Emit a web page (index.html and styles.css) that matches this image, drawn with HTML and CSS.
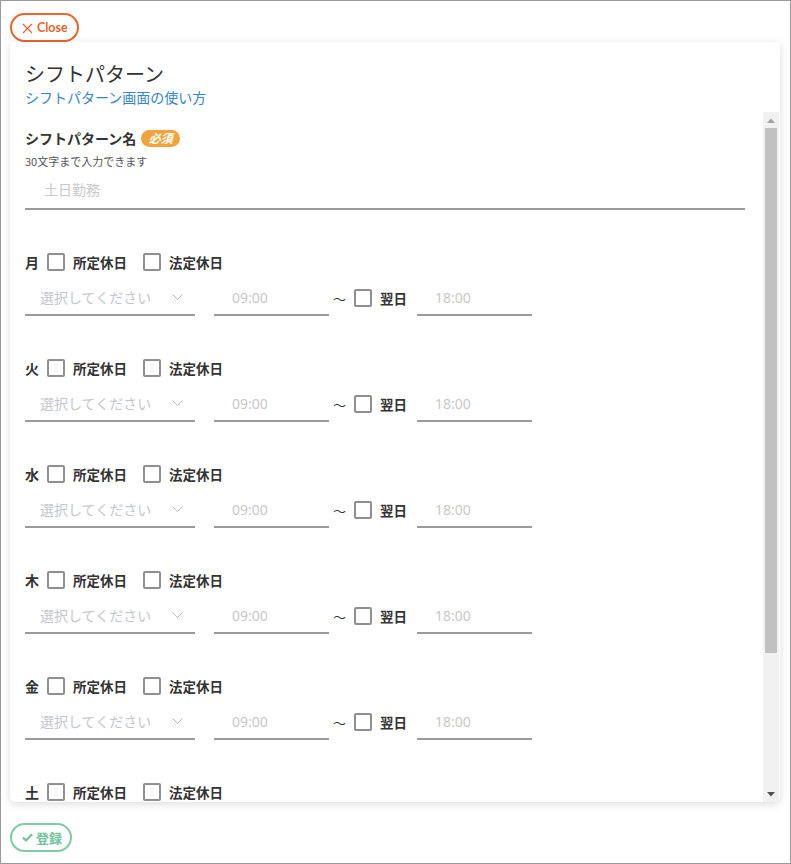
FILE: index.html
```html
<!DOCTYPE html>
<html lang="ja">
<head>
<meta charset="utf-8">
<title>シフトパターン</title>
<link rel="stylesheet" href="styles.css">
</head>
<body>
<div class="frame">
  <div class="top">
    <button class="btn btn-close" type="button">
      <svg class="ico" width="11" height="11" viewBox="0 0 11 11"><path d="M1 1 L10 10 M10 1 L1 10" stroke="currentColor" stroke-width="1.3" fill="none"/></svg>
      <span>Close</span>
    </button>
  </div>
  <div class="card">
    <div class="card-head">
      <h1 class="title">シフトパターン</h1>
      <a class="help-link" href="#">シフトパターン画面の使い方</a>
    </div>
    <div class="scroll-wrap">
      <div class="scroller">
        <div class="content">
          <div class="field-name">
            <div class="label-row"><span class="label">シフトパターン名</span><span class="badge">必須</span></div>
            <div class="hint">30文字まで入力できます</div>
            <input class="text-input" type="text" placeholder="土日勤務">
          </div>

          <div class="day">
            <div class="day-head">
              <span class="day-name">月</span>
              <input type="checkbox" class="cb"><span class="cb-label">所定休日</span>
              <input type="checkbox" class="cb cb-gap"><span class="cb-label">法定休日</span>
            </div>
            <div class="day-row">
              <div class="select"><span>選択してください</span><svg width="11" height="7" viewBox="0 0 11 7"><path d="M0.5 0.5 L5.5 5.5 L10.5 0.5" stroke="#b8b8b8" stroke-width="1" fill="none"/></svg></div>
              <input class="time" type="text" placeholder="09:00">
              <span class="tilde">〜</span>
              <input type="checkbox" class="cb cb-next"><span class="cb-label">翌日</span>
              <input class="time time-end" type="text" placeholder="18:00">
            </div>
          </div>

          <div class="day">
            <div class="day-head">
              <span class="day-name">火</span>
              <input type="checkbox" class="cb"><span class="cb-label">所定休日</span>
              <input type="checkbox" class="cb cb-gap"><span class="cb-label">法定休日</span>
            </div>
            <div class="day-row">
              <div class="select"><span>選択してください</span><svg width="11" height="7" viewBox="0 0 11 7"><path d="M0.5 0.5 L5.5 5.5 L10.5 0.5" stroke="#b8b8b8" stroke-width="1" fill="none"/></svg></div>
              <input class="time" type="text" placeholder="09:00">
              <span class="tilde">〜</span>
              <input type="checkbox" class="cb cb-next"><span class="cb-label">翌日</span>
              <input class="time time-end" type="text" placeholder="18:00">
            </div>
          </div>

          <div class="day">
            <div class="day-head">
              <span class="day-name">水</span>
              <input type="checkbox" class="cb"><span class="cb-label">所定休日</span>
              <input type="checkbox" class="cb cb-gap"><span class="cb-label">法定休日</span>
            </div>
            <div class="day-row">
              <div class="select"><span>選択してください</span><svg width="11" height="7" viewBox="0 0 11 7"><path d="M0.5 0.5 L5.5 5.5 L10.5 0.5" stroke="#b8b8b8" stroke-width="1" fill="none"/></svg></div>
              <input class="time" type="text" placeholder="09:00">
              <span class="tilde">〜</span>
              <input type="checkbox" class="cb cb-next"><span class="cb-label">翌日</span>
              <input class="time time-end" type="text" placeholder="18:00">
            </div>
          </div>

          <div class="day">
            <div class="day-head">
              <span class="day-name">木</span>
              <input type="checkbox" class="cb"><span class="cb-label">所定休日</span>
              <input type="checkbox" class="cb cb-gap"><span class="cb-label">法定休日</span>
            </div>
            <div class="day-row">
              <div class="select"><span>選択してください</span><svg width="11" height="7" viewBox="0 0 11 7"><path d="M0.5 0.5 L5.5 5.5 L10.5 0.5" stroke="#b8b8b8" stroke-width="1" fill="none"/></svg></div>
              <input class="time" type="text" placeholder="09:00">
              <span class="tilde">〜</span>
              <input type="checkbox" class="cb cb-next"><span class="cb-label">翌日</span>
              <input class="time time-end" type="text" placeholder="18:00">
            </div>
          </div>

          <div class="day">
            <div class="day-head">
              <span class="day-name">金</span>
              <input type="checkbox" class="cb"><span class="cb-label">所定休日</span>
              <input type="checkbox" class="cb cb-gap"><span class="cb-label">法定休日</span>
            </div>
            <div class="day-row">
              <div class="select"><span>選択してください</span><svg width="11" height="7" viewBox="0 0 11 7"><path d="M0.5 0.5 L5.5 5.5 L10.5 0.5" stroke="#b8b8b8" stroke-width="1" fill="none"/></svg></div>
              <input class="time" type="text" placeholder="09:00">
              <span class="tilde">〜</span>
              <input type="checkbox" class="cb cb-next"><span class="cb-label">翌日</span>
              <input class="time time-end" type="text" placeholder="18:00">
            </div>
          </div>

          <div class="day">
            <div class="day-head">
              <span class="day-name">土</span>
              <input type="checkbox" class="cb"><span class="cb-label">所定休日</span>
              <input type="checkbox" class="cb cb-gap"><span class="cb-label">法定休日</span>
            </div>
            <div class="day-row">
              <div class="select"><span>選択してください</span><svg width="11" height="7" viewBox="0 0 11 7"><path d="M0.5 0.5 L5.5 5.5 L10.5 0.5" stroke="#b8b8b8" stroke-width="1" fill="none"/></svg></div>
              <input class="time" type="text" placeholder="09:00">
              <span class="tilde">〜</span>
              <input type="checkbox" class="cb cb-next"><span class="cb-label">翌日</span>
              <input class="time time-end" type="text" placeholder="18:00">
            </div>
          </div>

          <div class="day">
            <div class="day-head">
              <span class="day-name">日</span>
              <input type="checkbox" class="cb"><span class="cb-label">所定休日</span>
              <input type="checkbox" class="cb cb-gap"><span class="cb-label">法定休日</span>
            </div>
            <div class="day-row">
              <div class="select"><span>選択してください</span><svg width="11" height="7" viewBox="0 0 11 7"><path d="M0.5 0.5 L5.5 5.5 L10.5 0.5" stroke="#b8b8b8" stroke-width="1" fill="none"/></svg></div>
              <input class="time" type="text" placeholder="09:00">
              <span class="tilde">〜</span>
              <input type="checkbox" class="cb cb-next"><span class="cb-label">翌日</span>
              <input class="time time-end" type="text" placeholder="18:00">
            </div>
          </div>
        </div>
      </div>
      <div class="scrollbar" aria-hidden="true">
        <div class="sb-arrow"><svg width="8" height="5" viewBox="0 0 8 5"><path d="M0 5 L4 0.5 L8 5 Z" fill="#a3a3a3"/></svg></div>
        <div class="sb-track"><div class="sb-thumb"></div></div>
        <div class="sb-arrow"><svg width="8" height="5" viewBox="0 0 8 5"><path d="M0 0 L8 0 L4 4.5 Z" fill="#505050"/></svg></div>
      </div>
    </div>
  </div>
  <div class="bottom">
    <button class="btn btn-submit" type="button">
      <svg class="ico" width="11" height="9" viewBox="0 0 11 9"><path d="M1 4.6 L4 7.5 L10 1.3" stroke="currentColor" stroke-width="2.2" fill="none" stroke-linejoin="round"/></svg>
      <span>登録</span>
    </button>
  </div>
</div>
</body>
</html>
```
FILE: styles.css
```css
* { box-sizing: border-box; }
html, body { margin: 0; padding: 0; background: #fff; }
body {
  font-family: "Noto Sans CJK JP", "Noto Sans", sans-serif;
  color: #333;
}
.frame {
  width: 791px;
  height: 864px;
  border: 1px solid #9a9a9a;
  padding: 11px 9px 0 9px;
  display: flex;
  flex-direction: column;
}
.top { height: 30px; }
.btn {
  display: inline-flex;
  align-items: center;
  gap: 4px;
  height: 29px;
  background: #fff;
  border-radius: 15px;
  border: 2px solid;
  font-family: "Lato", "Noto Sans CJK JP", sans-serif;
  font-weight: 700;
  font-size: 12.5px;
  padding: 0 9px 0 10px;
  cursor: pointer;
}
.btn-close {
  margin-top: 1px;
  height: 29px;
  width: 69px;
  color: #e9642f;
  border-color: #e9642f;
}
.btn-close .ico { margin-top: 1px; }
.card {
  width: 770px;
  height: 760px;
  background: #fff;
  border-radius: 0 0 5px 5px;
  box-shadow: 0 2px 8px rgba(0, 0, 0, 0.14);
  padding: 19px 1px 0 15px;
  display: flex;
  flex-direction: column;
}
.card-head { height: 51px; }
.title {
  margin: 0;
  font-size: 20px;
  font-weight: 400;
  line-height: 26px;
  color: #333;
}
.help-link {
  display: block;
  font-size: 14px;
  line-height: 20px;
  color: #3585c7;
  text-decoration: none;
}
.scroll-wrap {
  height: 690px;
  display: flex;
}
.scroller {
  flex: 1;
  min-width: 0;
  overflow: hidden;
}
.scrollbar {
  width: 16px;
  flex: none;
  background: #f1f1f1;
  display: flex;
  flex-direction: column;
}
.sb-arrow {
  height: 16px;
  display: flex;
  align-items: center;
  justify-content: center;
}
.sb-track {
  flex: 1;
  padding: 0 2px;
}
.sb-thumb {
  height: 525px;
  background: #c1c1c1;
}
.content {
  padding: 16px 18px 30px 0;
}
.label-row {
  display: flex;
  align-items: center;
  height: 20px;
}
.label {
  font-size: 14px;
  font-weight: 700;
  color: #333;
}
.badge {
  margin-left: 5px;
  width: 39px;
  height: 17px;
  border-radius: 9px;
  background: #f0a43c;
  color: #fff;
  font-size: 12px;
  font-weight: 700;
  font-style: italic;
  display: inline-flex;
  align-items: center;
  justify-content: center;
  line-height: 1;
}
.hint {
  margin-top: 5px;
  font-size: 11px;
  line-height: 16px;
  color: #555;
}
.text-input {
  display: block;
  width: 100%;
  height: 41px;
  border: 0;
  border-bottom: 2px solid #9a9a9a;
  padding: 0 0 0 19px;
  font-family: "Noto Sans CJK JP", sans-serif;
  font-size: 14px;
  outline: none;
  background: transparent;
}
.text-input::placeholder { color: #c8c8c8; }
.day { margin-top: 41px; }
.day-head {
  display: flex;
  align-items: center;
  height: 22px;
  font-size: 13.5px;
  font-weight: 700;
  color: #333;
}
.day-name { width: 22px; font-size: 14px; }
.cb {
  appearance: none;
  -webkit-appearance: none;
  margin: 0 8px 0 0;
  width: 18px;
  height: 18px;
  border: 2px solid #8f8f8f;
  border-radius: 2px;
  background: #fff;
  flex: none;
}
.cb-gap { margin-left: 16px; }
.cb-label { white-space: nowrap; }
.day-row {
  margin-top: 7px;
  display: flex;
  align-items: center;
  height: 36px;
}
.select {
  width: 170px;
  height: 36px;
  border-bottom: 2px solid #9a9a9a;
  display: flex;
  align-items: center;
  justify-content: space-between;
  padding: 0 12px 0 15px;
  font-size: 14px;
  color: #c3c6cd;
  flex: none;
}
.select svg { margin-top: 1px; }
.time {
  width: 115px;
  height: 36px;
  margin-left: 19px;
  border: 0;
  border-bottom: 2px solid #9a9a9a;
  padding: 0 0 0 18px;
  font-family: "Noto Sans", sans-serif;
  font-size: 14px;
  outline: none;
  background: transparent;
  flex: none;
}
.time::placeholder { color: #c8c8c8; }
.tilde {
  margin-left: 4px;
  font-size: 13px;
  color: #333;
  width: 21px;
  flex: none;
}
.cb-next { margin-left: 0; }
.day-row .cb-label {
  font-size: 13.5px;
  font-weight: 700;
  color: #333;
}
.time-end { margin-left: 10px; }
.bottom {
  margin-top: 21px;
}
.btn-submit {
  width: 62px;
  color: #6fc29a;
  border-color: #80cba6;
  font-family: "Noto Sans CJK JP", sans-serif;
  font-size: 13px;
  padding: 0 0 0 10px;
  gap: 3px;
}
```
